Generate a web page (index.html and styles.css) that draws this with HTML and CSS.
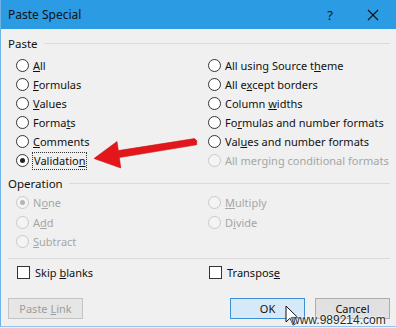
FILE: index.html
```html
<!DOCTYPE html>
<html lang="en">
<head>
    <meta charset="UTF-8">
    <title>Paste Special</title>
    <link rel="stylesheet" href="styles.css">
</head>
<body>
    <div class="dialog">
        <div class="titlebar">
            <span class="title">Paste Special</span>
            <span class="help">?</span>
            <span class="close">
                <svg width="12" height="12" viewBox="0 0 12 12"><path d="M1 1 L11 11 M11 1 L1 11" stroke="#111" stroke-width="1.1" fill="none"/></svg>
            </span>
        </div>

        <div class="content">
            <div class="legend"><span>Paste</span><div class="rule"></div></div>
            <div class="options">
                <label class="opt"><span class="radio"></span><span><u>A</u>ll</span></label>
                <label class="opt"><span class="radio"></span><span>All using Source t<u>h</u>eme</span></label>
                <label class="opt"><span class="radio"></span><span><u>F</u>ormulas</span></label>
                <label class="opt"><span class="radio"></span><span>All e<u>x</u>cept borders</span></label>
                <label class="opt"><span class="radio"></span><span><u>V</u>alues</span></label>
                <label class="opt"><span class="radio"></span><span>Column <u>w</u>idths</span></label>
                <label class="opt"><span class="radio"></span><span>Forma<u>t</u>s</span></label>
                <label class="opt"><span class="radio"></span><span>Fo<u>r</u>mulas and number formats</span></label>
                <label class="opt"><span class="radio"></span><span><u>C</u>omments</span></label>
                <label class="opt"><span class="radio"></span><span>Val<u>u</u>es and number formats</span></label>
                <label class="opt"><span class="radio checked"></span><span class="focus">Validatio<u>n</u></span></label>
                <label class="opt off"><span class="radio"></span><span>All merging conditional formats</span></label>
            </div>

            <div class="legend second"><span>Operation</span><div class="rule"></div></div>
            <div class="options ops">
                <label class="opt off"><span class="radio checked"></span><span>N<u>o</u>ne</span></label>
                <label class="opt off"><span class="radio"></span><span><u>M</u>ultiply</span></label>
                <label class="opt off"><span class="radio"></span><span>A<u>d</u>d</span></label>
                <label class="opt off"><span class="radio"></span><span>D<u>i</u>vide</span></label>
                <label class="opt off"><span class="radio"></span><span><u>S</u>ubtract</span></label>
            </div>

            <div class="rule full"></div>

            <div class="options checks">
                <label class="opt"><span class="box"></span><span>Skip <u>b</u>lanks</span></label>
                <label class="opt"><span class="box"></span><span>Transpos<u>e</u></span></label>
            </div>

            <div class="buttons">
                <div class="btn disabled"><span>Paste <u>L</u>ink</span></div>
                <div class="spacer"></div>
                <div class="btn default"><span>OK</span></div>
                <div class="btn"><span>Cancel</span></div>
            </div>
        </div>
    </div>

    <!-- annotation drawn over the screenshot -->
    <svg class="arrow" width="396" height="328" viewBox="0 0 396 328">
        <polygon points="94,158.5 117,141.5 118.3,150.6 194.5,138.6 196.8,140.8 196.6,144.8 119.3,157.6 120.8,168" fill="#e3161b" stroke="#c4141a" stroke-width="0.6" stroke-linejoin="round"/>
    </svg>
    <svg class="cursor" width="14" height="22" viewBox="0 0 14 22">
        <path d="M1 1 L1 17 L5 13.2 L8 20 L10.4 19 L7.5 12.4 L12.6 12.4 Z" fill="#fff" stroke="#111" stroke-width="1"/>
    </svg>
    <div class="watermark">www.989214.com</div>
</body>
</html>
```

FILE: styles.css
```css
body {
    margin: 0;
    width: 396px;
    height: 328px;
    overflow: hidden;
    background: #f0f0f0;
    font-family: "Noto Sans", "Open Sans", sans-serif;
    font-size: 11px;
    color: #111;
    position: relative;
}
.dialog {
    height: 327px;
    box-sizing: border-box;
    border-left: 1px solid #6fb3e6;
    border-bottom: 1px solid #8ec6ee;
    display: flex;
    flex-direction: column;
}
.titlebar {
    height: 29px;
    background: #2b9be3;
    display: flex;
    align-items: center;
    padding: 0 0 0 7px;
    color: #111;
}
.titlebar .title {
    font-size: 12px;
    flex: 1;
}
.titlebar .help {
    font-size: 13px;
    width: 46px;
    text-align: center;
    margin-right: -3px;
}
.titlebar .close {
    width: 46px;
    display: flex;
    justify-content: center;
}
.content {
    padding: 0 6px 0 7px;
    display: flex;
    flex-direction: column;
}
.legend {
    display: flex;
    align-items: center;
    height: 16px;
    margin-top: 6px;
    font-size: 11.5px;
}
.legend.second {
    margin-top: 5px;
}
.rule {
    flex: 1;
    border-top: 1px solid #dadada;
    margin-left: 6px;
}
.rule.full {
    margin: 6px 0 0 0;
    flex: none;
}
.options {
    display: grid;
    grid-template-columns: 192px 1fr;
    grid-auto-rows: 19px;
    padding-left: 8px;
    margin-top: 5px;
}
.options.ops {
    grid-auto-rows: 19.5px;
    margin-top: 2px;
}
.options.checks {
    margin-top: 6px;
    grid-auto-rows: 16px;
    padding-left: 9px;
}
.opt {
    display: flex;
    align-items: center;
    gap: 4px;
}
.opt.off {
    color: #a6a6a6;
}
.radio {
    width: 11px;
    height: 11px;
    border: 1px solid #333;
    border-radius: 50%;
    background: #fff;
    display: flex;
    align-items: center;
    justify-content: center;
    flex: none;
}
.radio.checked::after {
    content: "";
    width: 5px;
    height: 5px;
    border-radius: 50%;
    background: #222;
}
.opt.off .radio {
    border-color: #c9c9c9;
    background: #f4f4f4;
}
.opt.off .radio.checked::after {
    background: #b5b5b5;
}
.box {
    width: 11px;
    height: 11px;
    border: 1px solid #333;
    background: #fff;
    flex: none;
    margin-right: 1px;
}
.focus {
    outline: 1px dotted #333;
    padding: 0 1px;
    line-height: 16px;
}
.buttons {
    display: flex;
    margin-top: 17px;
    gap: 10px;
}
.spacer {
    flex: 1;
}
.btn {
    width: 73px;
    height: 19px;
    border: 1px solid #adadad;
    background: #e1e1e1;
    display: flex;
    align-items: center;
    justify-content: center;
}
.btn.disabled {
    color: #9d9d9d;
    border-color: #c4c4c4;
    background: #e6e6e6;
}
.btn.default {
    border-color: #3d8fd6;
    background: #d6e9f8;
}
.arrow {
    position: absolute;
    left: 0;
    top: 0;
}
.cursor {
    position: absolute;
    left: 285px;
    top: 305px;
}
.watermark {
    position: absolute;
    left: 291px;
    top: 313px;
    font-family: "Liberation Sans", sans-serif;
    font-size: 12px;
    color: #2a2a2a;
    text-shadow: 0 0 2px #fff, 0 0 2px #fff;
}
```
